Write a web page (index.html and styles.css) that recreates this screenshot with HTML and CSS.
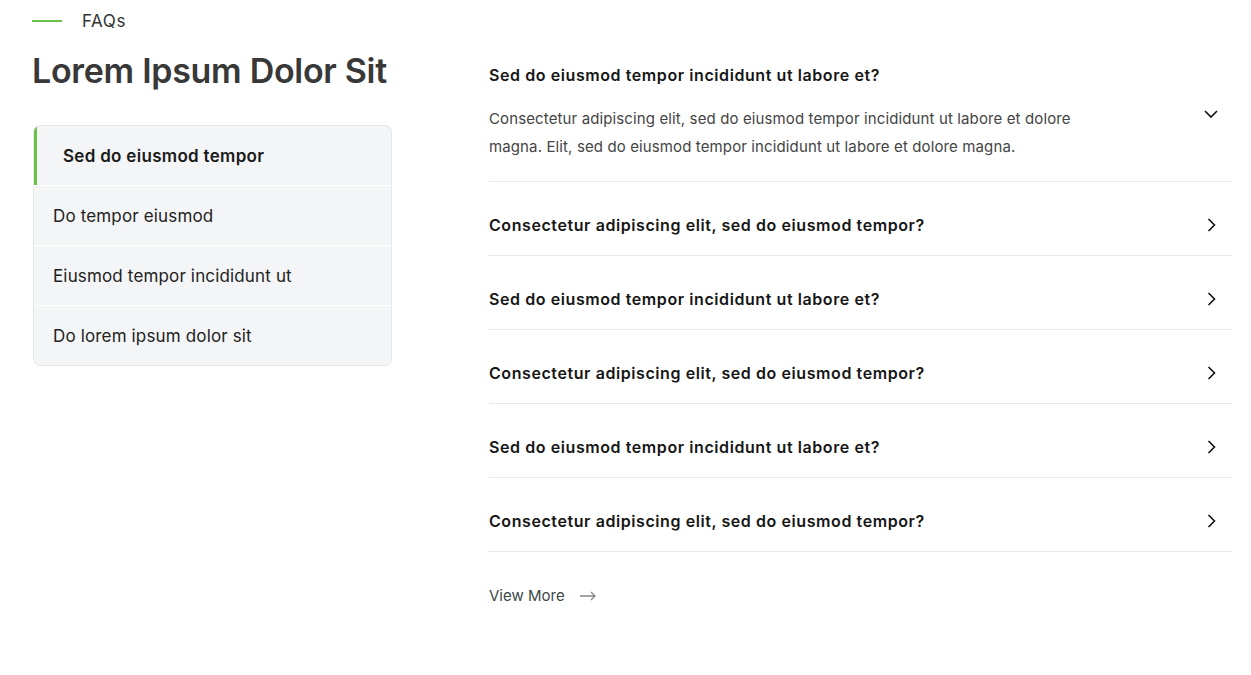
FILE: index.html
```html
<!DOCTYPE html>
<html>
<head>
<meta charset="utf-8">
<link rel="stylesheet" href="styles.css">
</head>
<body>
<div class="page">
  <aside class="left">
    <div class="eyebrow"><span class="eyebrow-line"></span><span class="eyebrow-text">FAQs</span></div>
    <h1 class="title">Lorem Ipsum Dolor Sit</h1>
    <ul class="cats">
      <li class="cat active">Sed do eiusmod tempor</li>
      <li class="cat">Do tempor eiusmod</li>
      <li class="cat">Eiusmod tempor incididunt ut</li>
      <li class="cat">Do lorem ipsum dolor sit</li>
    </ul>
  </aside>
  <main class="right">
    <div class="faq open">
      <div class="faq-body">
        <div class="q">Sed do eiusmod tempor incididunt ut labore et?</div>
        <p class="a">Consectetur adipiscing elit, sed do eiusmod tempor incididunt ut labore et dolore magna. Elit, sed do eiusmod tempor incididunt ut labore et dolore magna.</p>
      </div>
      <svg class="chev chev-down" width="14" height="9" viewBox="0 0 14 9"><path d="M1 1l6 6 6-6" fill="none" stroke="#111" stroke-width="1.6"/></svg>
    </div>
    <div class="faq">
      <div class="q">Consectetur adipiscing elit, sed do eiusmod tempor?</div>
      <svg class="chev" width="9" height="14" viewBox="0 0 9 14"><path d="M1.5 1l6 6-6 6" fill="none" stroke="#111" stroke-width="1.6"/></svg>
    </div>
    <div class="faq">
      <div class="q">Sed do eiusmod tempor incididunt ut labore et?</div>
      <svg class="chev" width="9" height="14" viewBox="0 0 9 14"><path d="M1.5 1l6 6-6 6" fill="none" stroke="#111" stroke-width="1.6"/></svg>
    </div>
    <div class="faq">
      <div class="q">Consectetur adipiscing elit, sed do eiusmod tempor?</div>
      <svg class="chev" width="9" height="14" viewBox="0 0 9 14"><path d="M1.5 1l6 6-6 6" fill="none" stroke="#111" stroke-width="1.6"/></svg>
    </div>
    <div class="faq">
      <div class="q">Sed do eiusmod tempor incididunt ut labore et?</div>
      <svg class="chev" width="9" height="14" viewBox="0 0 9 14"><path d="M1.5 1l6 6-6 6" fill="none" stroke="#111" stroke-width="1.6"/></svg>
    </div>
    <div class="faq">
      <div class="q">Consectetur adipiscing elit, sed do eiusmod tempor?</div>
      <svg class="chev" width="9" height="14" viewBox="0 0 9 14"><path d="M1.5 1l6 6-6 6" fill="none" stroke="#111" stroke-width="1.6"/></svg>
    </div>
    <a class="more" href="#">View More <svg width="17" height="10" viewBox="0 0 17 10"><path d="M0 5h15M11 1l4 4-4 4" fill="none" stroke="#888" stroke-width="1.3"/></svg></a>
  </main>
</div>
</body>
</html>
```

FILE: styles.css
```css
* { box-sizing: border-box; }
html, body { margin: 0; padding: 0; background: #fff; }
body { font-family: Inter, "Noto Sans", sans-serif; color: #222; }
.page {
  display: flex;
  padding: 0 19px 0 33px;
  gap: 97px;
}
.left { width: 359px; flex: none; }
.eyebrow { display: flex; align-items: center; gap: 20px; height: 41px; margin-left: -1px; }
.eyebrow-line { width: 30px; height: 2px; background: #6dbf4b; }
.eyebrow-text { font-size: 17px; letter-spacing: 0.6px; color: #333; }
.title { margin: 8px 0 0 -1px; font-size: 34px; font-weight: 600; color: #383838; line-height: 44px; letter-spacing: -0.3px; }
.cats {
  list-style: none; margin: 32px 0 0; padding: 0;
  background: #f4f5f7; border: 1px solid #e6e7ea; border-radius: 7px; overflow: hidden;
}
.cat {
  height: 60px; display: flex; align-items: center; padding-left: 19px;
  font-size: 17px; letter-spacing: 0.15px; color: #222; border-top: 1px solid #fff;
}
.cat:first-child { border-top: 0; height: 59px; }
.cat.active { border-left: 3px solid #6dbf4b; padding-left: 26px; font-weight: 600; color: #1a1a1a; letter-spacing: 0.3px; }
.right { flex: 1; padding-top: 54px; }
.faq {
  display: flex; align-items: center; justify-content: space-between;
  border-bottom: 1px solid #e8e8e8; height: 74px; padding: 12px 16px 0 0;
}
.faq.open { height: auto; padding: 11px 14px 20px 0; }
.q { font-size: 16px; font-weight: 600; color: #161616; letter-spacing: 0.58px; }
.a { margin: 20px 0 0; font-size: 15px; line-height: 28px; color: #444; max-width: 600px; letter-spacing: 0.12px; }
.chev-down { margin-top: 2px; margin-right: 0; }
.more {
  display: inline-flex; align-items: center; gap: 15px; margin-top: 34px;
  font-size: 15px; color: #3d4747; text-decoration: none;
}
```
